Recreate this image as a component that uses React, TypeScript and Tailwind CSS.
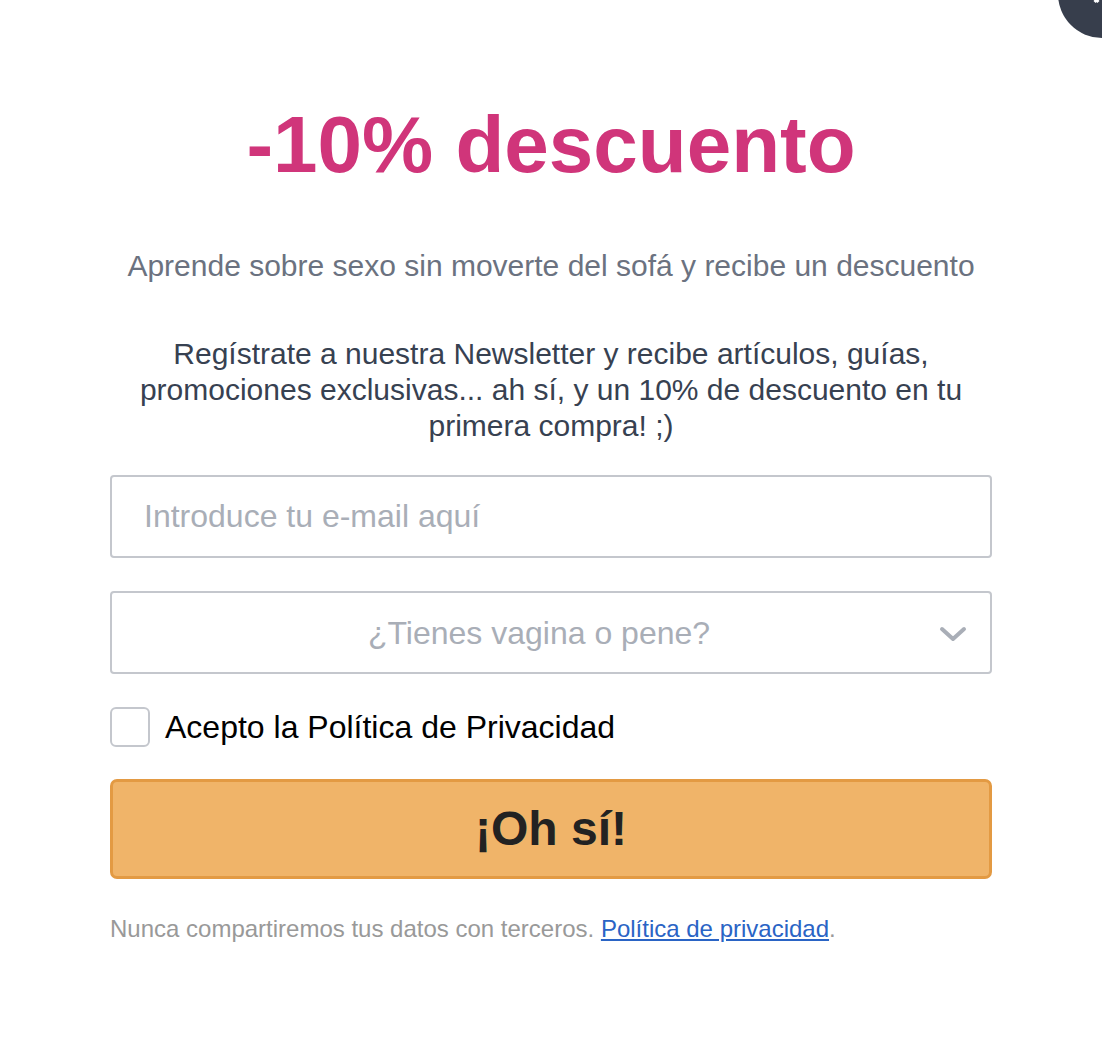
export default function App() {
  return (
    <div className="relative min-h-[1052px] w-full overflow-hidden bg-white font-['Liberation_Sans',Arial,sans-serif]">
      {/* close button peeking in from the corner */}
      <div className="absolute -right-[44px] -top-[50px] h-[88px] w-[88px] rounded-full bg-[#373e4c]">
        <span className="absolute left-[34px] top-[40px] block h-[14px] w-[3px] -rotate-45 bg-white" />
        <span className="absolute left-[40px] top-[40px] block h-[14px] w-[3px] rotate-45 bg-white" />
      </div>

      <div className="mx-auto flex w-[882px] flex-col items-center pt-[97px]">
        <h1 className="text-[80px] font-bold leading-[96px] text-[#d0357a]">-10% descuento</h1>

        <p className="mt-[55px] text-center text-[30px] leading-[36px] text-[#6b7280]">
          Aprende sobre sexo sin moverte del sofá y recibe un descuento
        </p>

        <p className="mt-[52px] text-center text-[30px] leading-[36px] text-[#374151]">
          Regístrate a nuestra Newsletter y recibe artículos, guías, promociones exclusivas... ah sí, y un 10% de descuento en tu primera compra! ;)
        </p>

        <form className="mt-[31px] flex w-full flex-col" onSubmit={e => e.preventDefault()}>
          <input
            type="email"
            placeholder="Introduce tu e-mail aquí"
            className="h-[83px] w-full rounded-[4px] border-2 border-[#c4c7cd] px-[32px] text-[32px] text-[#374151] outline-none placeholder:text-[#a9aeb7]"
          />

          <div className="relative mt-[33px] h-[83px] w-full rounded-[4px] border-2 border-[#c4c7cd]">
            <div className="flex h-full items-center justify-center pr-[24px] text-[32px] text-[#a9aeb7]">
              ¿Tienes vagina o pene?
            </div>
            <svg
              viewBox="0 0 28 17"
              className="absolute right-[23px] top-[33px] h-[17px] w-[28px]"
              fill="none"
              stroke="#a9aeb7"
              strokeWidth="4"
              strokeLinecap="round"
              strokeLinejoin="round"
            >
              <polyline points="3,3 14,13 25,3" />
            </svg>
          </div>

          <label className="mt-[33px] flex items-center gap-[15px]">
            <span className="block h-[40px] w-[40px] rounded-[6px] border-2 border-[#c4c7cd] bg-white" />
            <span className="text-[32px] leading-[40px] text-black">Acepto la Política de Privacidad</span>
          </label>

          <button
            type="submit"
            className="mt-[32px] h-[100px] w-full rounded-[7px] border-[3px] border-[#e39a43] bg-[#f0b469] text-[48px] font-bold text-[#222222]"
          >
            ¡Oh sí!
          </button>

          <p className="mt-[36px] text-[24px] leading-[28px] text-[#999999]">
            Nunca compartiremos tus datos con terceros.{' '}
            <a href="#" className="text-[#2a64c5] underline">Política de privacidad</a>.
          </p>
        </form>
      </div>
    </div>
  )
}
